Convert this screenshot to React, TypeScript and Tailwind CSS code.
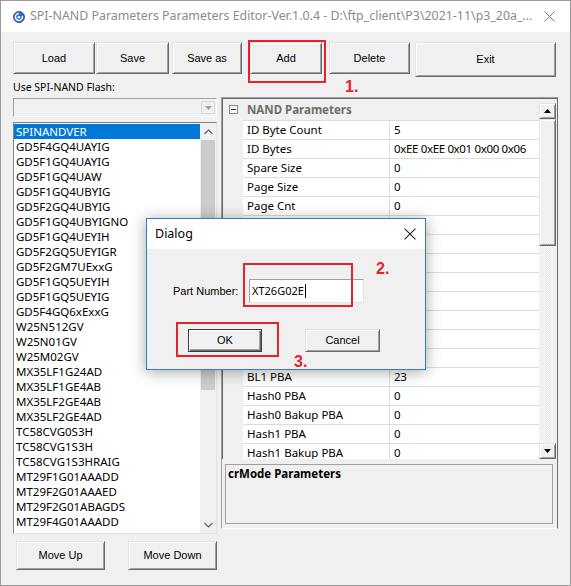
import React from 'react'

const PARTS = [
  'SPINANDVER',
  'GD5F4GQ4UAYIG',
  'GD5F1GQ4UAYIG',
  'GD5F1GQ4UAW',
  'GD5F1GQ4UBYIG',
  'GD5F2GQ4UBYIG',
  'GD5F1GQ4UBYIGNO',
  'GD5F1GQ4UEYIH',
  'GD5F2GQ5UEYIGR',
  'GD5F2GM7UExxG',
  'GD5F1GQ5UEYIH',
  'GD5F1GQ5UEYIG',
  'GD5F4GQ6xExxG',
  'W25N512GV',
  'W25N01GV',
  'W25M02GV',
  'MX35LF1G24AD',
  'MX35LF1GE4AB',
  'MX35LF2GE4AB',
  'MX35LF2GE4AD',
  'TC58CVG0S3H',
  'TC58CVG1S3H',
  'TC58CVG1S3HRAIG',
  'MT29F1G01AAADD',
  'MT29F2G01AAAED',
  'MT29F2G01ABAGDS',
  'MT29F4G01AAADD',
  'MT29F1G01ABAFD',
]

const PARAMS: [string, string][] = [
  ['ID Byte Count', '5'],
  ['ID Bytes', '0xEE 0xEE 0x01 0x00 0x06'],
  ['Spare Size', '0'],
  ['Page Size', '0'],
  ['Page Cnt', '0'],
  ['Block Cnt', '0'],
  ['Plane Cnt', '0'],
  ['Bad Block Mark', '0'],
  ['Quad Enable', '0'],
  ['ECC Mode', '0'],
  ['BL0 PBA', '0'],
  ['BL0 Bakup PBA', '0'],
  ['BL1 Bakup PBA', '0'],
  ['BL1 PBA', '23'],
  ['Hash0 PBA', '0'],
  ['Hash0 Bakup PBA', '0'],
  ['Hash1 PBA', '0'],
  ['Hash1 Bakup PBA', '0'],
]

function WinButton({ label, className = '', isDefault = false }: { label: string; className?: string; isDefault?: boolean }) {
  return (
    <div
      className={`flex items-center justify-center bg-[#f0f0f0] border text-[11px] text-black font-['Liberation_Sans',sans-serif] ${
        isDefault
          ? 'border-[#3c3c3c] shadow-[inset_1px_1px_#fff,inset_-1px_-1px_#696969,inset_-2px_-2px_#a0a0a0]'
          : 'border-t-[#e3e3e3] border-l-[#e3e3e3] border-r-[#696969] border-b-[#696969] shadow-[inset_1px_1px_#fff,inset_-1px_-1px_#a0a0a0]'
      } ${className}`}
    >
      {label}
    </div>
  )
}

function RedBox({ className }: { className: string }) {
  return <div className={`absolute border-2 border-[#e3242b] pointer-events-none ${className}`} />
}

function RedNum({ text, className }: { text: string; className: string }) {
  return (
    <div className={`absolute text-[16px] leading-[16px] font-bold text-[#e3242b] font-['Liberation_Sans',sans-serif] ${className}`}>
      {text}
    </div>
  )
}

function AppIcon() {
  return (
    <svg width="12" height="12" viewBox="0 0 12 12">
      <circle cx="6" cy="6" r="5.5" fill="#2f6fc9" stroke="#1b3f7a" strokeWidth="0.8" />
      <path d="M6 2.5a3.5 3.5 0 1 0 3.3 2.4" fill="none" stroke="#fff" strokeWidth="1.4" />
      <circle cx="6" cy="6.3" r="1.3" fill="#fff" />
    </svg>
  )
}

function CloseX({ size = 11, color = '#808080' }: { size?: number; color?: string }) {
  return (
    <svg width={size} height={size} viewBox="0 0 11 11">
      <path d="M0.5 0.5L10.5 10.5M10.5 0.5L0.5 10.5" stroke={color} strokeWidth="1" />
    </svg>
  )
}

function Dialog() {
  return (
    <div className="absolute left-[145px] top-[217px] w-[280px] h-[152px] border border-[#2b7fd6] bg-[#f0f0f0] shadow-[0_2px_14px_rgba(0,0,0,0.35)] flex flex-col">
      {/* title */}
      <div className="h-[30px] bg-white flex items-center pl-[8px] pr-[9px]">
        <span className="text-[12.5px] text-black">Dialog</span>
        <div className="flex-1" />
        <CloseX size={12} color="#222" />
      </div>
      {/* body */}
      <div className="flex items-center mt-[30px] pl-[26px]">
        <span className="w-[76px] text-[11px] text-black font-['Liberation_Sans',sans-serif]">Part Number:</span>
        <div className="w-[115px] h-[24px] bg-white border border-t-[#a0a0a0] border-l-[#a0a0a0] border-r-[#e3e3e3] border-b-[#e3e3e3] flex items-center pl-[2px]">
          <span className="text-[11px] text-black">XT26G02E</span>
          <span className="w-px h-[14px] bg-black ml-[1px]" />
        </div>
      </div>
      <div className="flex mt-[26px] pl-[41px]">
        <WinButton label="OK" isDefault className="w-[74px] h-[23px]" />
        <WinButton label="Cancel" className="w-[75px] h-[23px] ml-[43px]" />
      </div>
    </div>
  )
}

export default function App() {
  return (
    <div className="relative w-[571px] h-[586px] bg-[#f0f0f0] border border-[#9a9a9a] overflow-hidden font-['Noto_Sans',sans-serif] flex flex-col">
      {/* Title bar */}
      <div className="h-[31px] bg-white flex items-center pl-[12px] pr-[15px] shrink-0">
        <AppIcon />
        <span className="ml-[5px] text-[12.4px] text-[#8c8c8c] whitespace-nowrap">
          SPI-NAND Parameters Parameters Editor-Ver.1.0.4 - D:\ftp_client\P3\2021-11\p3_20a_...
        </span>
        <div className="flex-1" />
        <CloseX />
      </div>

      {/* Toolbar */}
      <div className="flex items-start mt-[10px] pl-[12px] h-[35px] shrink-0">
        <WinButton label="Load" className="w-[82px] h-[32px]" />
        <WinButton label="Save" className="w-[73px] h-[32px] ml-[1px]" />
        <WinButton label="Save as" className="w-[70px] h-[32px] ml-[3px]" />
        <WinButton label="Add" className="w-[72px] h-[32px] ml-[8px]" />
        <WinButton label="Delete" className="w-[81px] h-[32px] ml-[7px]" />
        <WinButton label="Exit" className="w-[141px] h-[35px] ml-[5px]" />
      </div>

      {/* Main area */}
      <div className="flex pl-[12px]">
        {/* left column */}
        <div className="w-[204px] flex flex-col">
          <div className="mt-[3px] h-[14px] text-[10.5px] leading-[14px] text-black">Use SPI-NAND Flash:</div>
          <div className="mt-[4px] h-[19px] border border-t-[#a0a0a0] border-l-[#a0a0a0] border-r-white border-b-white bg-[#f0f0f0] flex justify-end">
            <div className="w-[14px] h-[13px] mt-[2px] mr-[1px] border border-[#d8d8d8] flex items-center justify-center">
              <svg width="7" height="4" viewBox="0 0 7 4">
                <path d="M0 0H7L3.5 4Z" fill="#a0a0a0" />
              </svg>
            </div>
          </div>
          {/* listbox */}
          <div className="mt-[5px] h-[412px] border border-t-[#828282] border-l-[#828282] border-r-[#e3e3e3] border-b-[#e3e3e3] bg-white flex overflow-hidden">
            <div className="flex-1 flex flex-col pt-[1px] overflow-hidden">
              {PARTS.map((p, i) => (
                <div
                  key={p}
                  className={`h-[15px] shrink-0 leading-[15px] text-[11.5px] pl-[2px] whitespace-nowrap ${
                    i === 0 ? 'bg-[#0078d7] text-white' : 'text-black'
                  }`}
                >
                  {p}
                </div>
              ))}
            </div>
            <div className="w-[16px] bg-[#f0f0f0] flex flex-col">
              <div className="h-[17px] flex items-center justify-center">
                <svg width="9" height="6" viewBox="0 0 9 6">
                  <path d="M0.5 5L4.5 1L8.5 5" fill="none" stroke="#606060" strokeWidth="1.2" />
                </svg>
              </div>
              <div className="h-[250px] mx-[1px] bg-[#cdcdcd]" />
              <div className="flex-1" />
              <div className="h-[17px] flex items-center justify-center">
                <svg width="9" height="6" viewBox="0 0 9 6">
                  <path d="M0.5 1L4.5 5L8.5 1" fill="none" stroke="#606060" strokeWidth="1.2" />
                </svg>
              </div>
            </div>
          </div>
          <div className="flex mt-[7px]">
            <WinButton label="Move Up" className="w-[90px] h-[29px] ml-[3px]" />
            <WinButton label="Move Down" className="w-[90px] h-[29px] ml-[23px]" />
          </div>
        </div>

        {/* right column */}
        <div className="ml-[4px] mt-[20px] w-[337px] h-[432px] border border-t-[#a0a0a0] border-l-[#a0a0a0] border-r-[#696969] border-b-white flex flex-col">
          {/* property grid */}
          <div className="h-[361px] border-t border-l border-[#696969] flex bg-[#f0f0f0] overflow-hidden">
            <div className="flex-1 flex flex-col overflow-hidden">
              <div className="h-[21px] shrink-0 flex items-center">
                <div className="w-[20px] flex justify-center">
                  <div className="w-[9px] h-[9px] border border-[#8a8a8a] bg-white flex items-center justify-center">
                    <div className="w-[5px] h-px bg-[#333]" />
                  </div>
                </div>
                <span className="pl-[4px] text-[11.5px] font-bold text-[#6d6d6d]">NAND Parameters</span>
              </div>
              {PARAMS.map(([k, v]) => (
                <div key={k} className="h-[19px] shrink-0 flex">
                  <div className="w-[20px]" />
                  <div className="w-[147px] bg-white border-t border-r border-[#dcdcdc] pl-[4px] text-[11.5px] leading-[17px] text-black whitespace-nowrap overflow-hidden">
                    {k}
                  </div>
                  <div className="flex-1 bg-white border-t border-[#dcdcdc] pl-[4px] text-[11.5px] leading-[17px] tracking-[-0.35px] text-black whitespace-nowrap overflow-hidden">
                    {v}
                  </div>
                </div>
              ))}
            </div>
            {/* grid scrollbar */}
            <div className="w-[17px] mr-[1px] mt-[4px] flex flex-col">
              <div className="h-[16px] shrink-0 bg-[#f0f0f0] border border-t-[#e3e3e3] border-l-[#e3e3e3] border-r-[#696969] border-b-[#696969] shadow-[inset_1px_1px_#fff,inset_-1px_-1px_#a0a0a0] flex items-center justify-center">
                <svg width="7" height="4" viewBox="0 0 7 4">
                  <path d="M3.5 0L7 4H0Z" fill="#000" />
                </svg>
              </div>
              <div className="h-[127px] shrink-0 bg-[#f0f0f0] border border-t-[#e3e3e3] border-l-[#e3e3e3] border-r-[#696969] border-b-[#696969] shadow-[inset_1px_1px_#fff,inset_-1px_-1px_#a0a0a0]" />
              <div className="flex-1 bg-[repeating-conic-gradient(#ffffff_0_25%,#e6e6e6_0_50%)] bg-[length:2px_2px]" />
              <div className="h-[16px] shrink-0 bg-[#f0f0f0] border border-t-[#e3e3e3] border-l-[#e3e3e3] border-r-[#696969] border-b-[#696969] shadow-[inset_1px_1px_#fff,inset_-1px_-1px_#a0a0a0] flex items-center justify-center">
                <svg width="7" height="4" viewBox="0 0 7 4">
                  <path d="M0 0H7L3.5 4Z" fill="#000" />
                </svg>
              </div>
            </div>
          </div>
          {/* description pane */}
          <div className="mt-[5px] ml-[3px] w-[328px] h-[60px] border border-[#a0a0a0] bg-[#f0f0f0] pl-[2px] pt-[1px]">
            <div className="text-[11.5px] leading-[16px] font-bold text-black">crMode Parameters</div>
          </div>
        </div>
      </div>

      {/* annotations + modal dialog */}
      <RedBox className="left-[247px] top-[39px] w-[78px] h-[43px]" />
      <RedNum text="1." className="left-[344px] top-[78px]" />
      <Dialog />
      <RedBox className="left-[242px] top-[262px] w-[110px] h-[44px]" />
      <RedNum text="2." className="left-[375px] top-[260px]" />
      <RedBox className="left-[175px] top-[321px] w-[103px] h-[35px]" />
      <RedNum text="3." className="left-[293px] top-[353px]" />
    </div>
  )
}
